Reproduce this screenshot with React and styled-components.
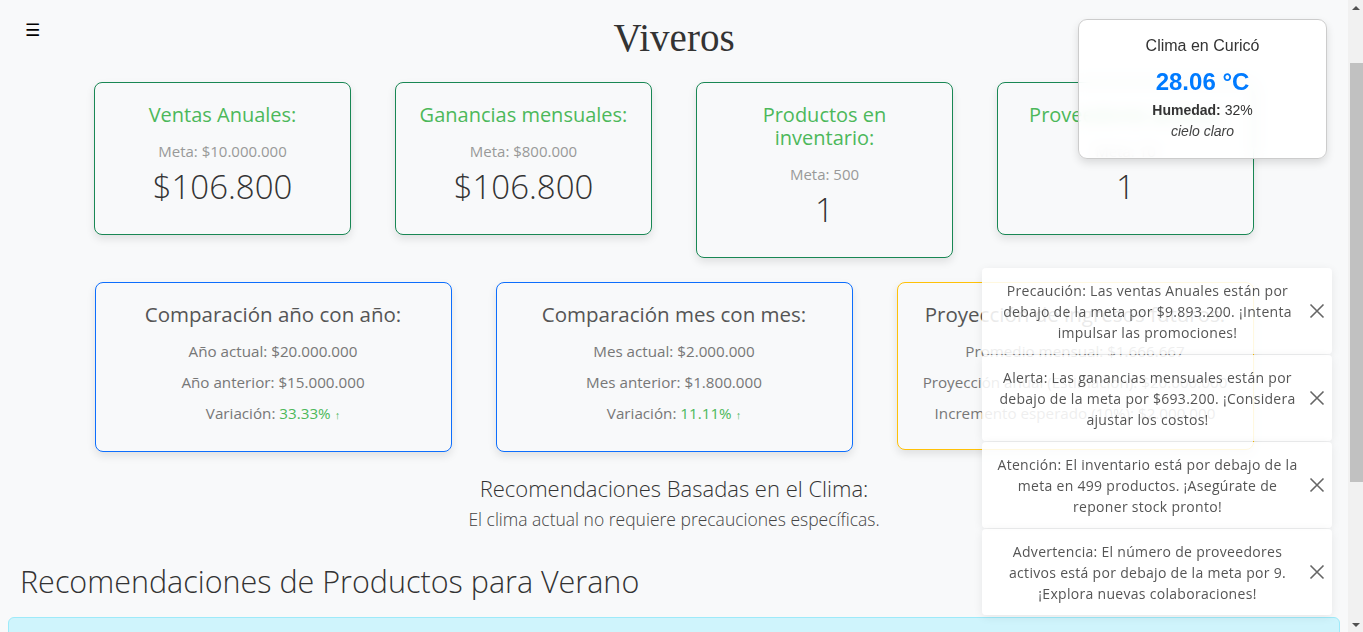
import React from "react";
import styled, { createGlobalStyle } from "styled-components";

const GlobalStyle = createGlobalStyle`
  html, body { margin: 0; padding: 0; }
  body {
    background: #f8f9fa;
    font-family: "Open Sans", "Noto Sans", sans-serif;
    color: #333;
  }
  * { box-sizing: border-box; }
`;

const Page = styled.div`
  padding: 0 23px 80px 8px;
`;

const Header = styled.header`
  display: grid;
  grid-template-columns: 1fr auto 1fr;
  align-items: start;
  height: 82px;
`;

const MenuButton = styled.button`
  justify-self: start;
  margin: 20px 0 0 9px;
  padding: 0 8px;
  background: none;
  border: none;
  font-size: 17px;
  line-height: 20px;
  color: #000;
  font-family: "DejaVu Sans", sans-serif;
  cursor: pointer;
`;

const Title = styled.h1`
  margin: 14px 0 0;
  font-family: "Liberation Serif", serif;
  font-weight: 400;
  font-size: 39px;
  line-height: 48px;
  color: #333;
`;

const CardRow = styled.div`
  display: flex;
  justify-content: center;
  align-items: flex-start;
  gap: 44px;
  margin-bottom: ${(p) => p.$mb || 0}px;
`;

const Card = styled.div`
  width: ${(p) => p.$w}px;
  border: 1px solid ${(p) => p.$border};
  border-radius: 8px;
  background: #f8f9fa;
  box-shadow: 0 4px 8px rgba(0, 0, 0, 0.1);
  text-align: center;
  padding: ${(p) => p.$pad};
`;

const KpiTitle = styled.h3`
  margin: 0 0 15px;
  font-size: 20px;
  line-height: 23px;
  font-weight: 400;
  color: #4cb85a;
`;

const KpiMeta = styled.p`
  margin: 0 0 7px;
  font-size: 15px;
  line-height: 20px;
  color: #999;
`;

const KpiValue = styled.p`
  margin: 0;
  font-size: 33px;
  line-height: 38px;
  font-weight: 300;
  color: #333;
`;

const CompTitle = styled.h3`
  margin: 0 0 14px;
  font-size: 20.5px;
  line-height: 24px;
  font-weight: 400;
  color: #555;
`;

const CompLine = styled.p`
  margin: 0 0 9px;
  font-size: 15.2px;
  line-height: 22px;
  color: #777;
  &:last-child { margin-bottom: 0; }
`;

const Up = styled.span`
  color: #4cb85a;
  small { font-size: 11px; margin-left: 4px; }
`;

const WeatherRec = styled.section`
  text-align: center;
  margin-bottom: 31px;
`;

const RecTitle = styled.h4`
  margin: 0 0 6px;
  font-size: 22px;
  line-height: 26px;
  font-weight: 300;
  color: #333;
`;

const RecText = styled.p`
  margin: 0;
  font-size: 17.5px;
  line-height: 24px;
  font-weight: 300;
  color: #444;
`;

const SectionTitle = styled.h2`
  margin: 0 0 17px 12px;
  font-size: 30.5px;
  line-height: 38px;
  font-weight: 300;
  color: #333;
`;

const InfoBox = styled.div`
  background: #cff4fc;
  border: 1px solid #9eeaf9;
  border-radius: 6px;
  padding: 22px 16px;
  color: #055160;
  font-size: 15px;
  min-height: 220px;
`;

const Weather = styled.aside`
  position: fixed;
  top: 19px;
  right: 36px;
  width: 249px;
  padding: 16px 10px 16px;
  background: rgba(255, 255, 255, 0.88);
  backdrop-filter: blur(6px);
  border: 1px solid #ccc;
  border-radius: 9px;
  box-shadow: 0 4px 8px rgba(0, 0, 0, 0.12);
  text-align: center;
  font-family: "Liberation Sans", Arial, sans-serif;
  color: #333;
  z-index: 10;
`;

const WeatherCity = styled.div`
  font-size: 16px;
  line-height: 20px;
  margin-bottom: 12px;
`;

const WeatherTemp = styled.div`
  font-size: 24px;
  line-height: 28px;
  font-weight: 700;
  color: #007bff;
  margin-bottom: 4px;
`;

const WeatherLine = styled.div`
  font-size: 14px;
  line-height: 21px;
  font-style: ${(p) => (p.$italic ? "italic" : "normal")};
  color: ${(p) => (p.$italic ? "#444" : "#333")};
  b { font-weight: 700; }
`;

const ToastStack = styled.div`
  position: fixed;
  right: 31px;
  bottom: 17px;
  width: 350px;
  display: flex;
  flex-direction: column;
  gap: 1px;
  z-index: 20;
`;

const Toast = styled.div`
  display: flex;
  align-items: center;
  min-height: 86px;
  padding: 8px 4px 8px 13px;
  background: rgba(255, 255, 255, 0.88);
  border-radius: 4px;
  box-shadow: 0 2px 10px rgba(0, 0, 0, 0.08);
`;

const ToastText = styled.p`
  flex: none;
  width: 305px;
  margin: 0;
  text-align: center;
  font-size: 14px;
  letter-spacing: 0.3px;
  line-height: 21px;
  color: #555;
`;

const CloseBtn = styled.button`
  flex: none;
  width: 22px;
  height: 22px;
  margin-left: 6px;
  padding: 0;
  background: none;
  border: none;
  display: flex;
  align-items: center;
  justify-content: center;
  cursor: pointer;
`;

const CloseIcon = () => (
  <svg width="16" height="16" viewBox="0 0 16 16" fill="none" stroke="#666" strokeWidth="1.6">
    <path d="M1.5 1.5 L14.5 14.5 M14.5 1.5 L1.5 14.5" />
  </svg>
);

const ScrollRail = styled.div`
  position: fixed;
  top: 0;
  right: 0;
  bottom: 0;
  width: 15px;
  background: #f1f1f1;
  display: flex;
  flex-direction: column;
  z-index: 30;
`;

const ScrollArrow = styled.div`
  flex: none;
  height: 15px;
  display: flex;
  align-items: center;
  justify-content: center;
  &::before {
    content: "";
    border-left: 4px solid transparent;
    border-right: 4px solid transparent;
    ${(p) => (p.$down ? "border-top: 4px solid #505050;" : "border-bottom: 4px solid #505050;")}
  }
`;

const ScrollTrack = styled.div`
  flex: 1;
  padding-top: 48px;
`;

const ScrollThumb = styled.div`
  height: 419px;
  margin: 0 0 0 2px;
  background: #c1c1c1;
`;

const kpis = [
  { title: "Ventas Anuales:", meta: "Meta: $10.000.000", value: "$106.800" },
  { title: "Ganancias mensuales:", meta: "Meta: $800.000", value: "$106.800" },
  { title: "Productos en inventario:", meta: "Meta: 500", value: "1" },
  { title: "Proveedores activos:", meta: "Meta: 10", value: "1" },
];

const comps = [
  {
    border: "#0d6efd",
    title: "Comparación año con año:",
    lines: ["Año actual: $20.000.000", "Año anterior: $15.000.000"],
    variation: "33.33%",
  },
  {
    border: "#0d6efd",
    title: "Comparación mes con mes:",
    lines: ["Mes actual: $2.000.000", "Mes anterior: $1.800.000"],
    variation: "11.11%",
  },
  {
    border: "#ffc107",
    title: "Proyección de ingresos futuros:",
    lines: [
      "Promedio mensual: $1.666.667",
      "Proyección anual (Estimación): $20.000.000",
      "Incremento esperado (10%): $2.000.000",
    ],
  },
];

const toasts = [
  "Precaución: Las ventas Anuales están por debajo de la meta por $9.893.200. ¡Intenta impulsar las promociones!",
  "Alerta: Las ganancias mensuales están por debajo de la meta por $693.200. ¡Considera ajustar los costos!",
  "Atención: El inventario está por debajo de la meta en 499 productos. ¡Asegúrate de reponer stock pronto!",
  "Advertencia: El número de proveedores activos está por debajo de la meta por 9. ¡Explora nuevas colaboraciones!",
];

export default function App() {
  return (
    <>
      <GlobalStyle />
      <Page>
        <Header>
          <MenuButton aria-label="menu">☰</MenuButton>
          <Title>Viveros</Title>
          <div />
        </Header>

        <CardRow $mb={24}>
          {kpis.map((k) => (
            <Card key={k.title} $w={257} $border="#198754" $pad="20px 20px 28px">
              <KpiTitle>{k.title}</KpiTitle>
              <KpiMeta>{k.meta}</KpiMeta>
              <KpiValue>{k.value}</KpiValue>
            </Card>
          ))}
        </CardRow>

        <CardRow $mb={23}>
          {comps.map((c) => (
            <Card key={c.title} $w={357} $border={c.border} $pad="19px 12px 25px">
              <CompTitle>{c.title}</CompTitle>
              {c.lines.map((l) => (
                <CompLine key={l}>{l}</CompLine>
              ))}
              {c.variation && (
                <CompLine>
                  Variación:{" "}
                  <Up>
                    {c.variation}
                    <small>↑</small>
                  </Up>
                </CompLine>
              )}
            </Card>
          ))}
        </CardRow>

        <WeatherRec>
          <RecTitle>Recomendaciones Basadas en el Clima:</RecTitle>
          <RecText>El clima actual no requiere precauciones específicas.</RecText>
        </WeatherRec>

        <SectionTitle>Recomendaciones de Productos para Verano</SectionTitle>
        <InfoBox>Productos recomendados para la temporada de verano.</InfoBox>
      </Page>

      <Weather>
        <WeatherCity>Clima en Curicó</WeatherCity>
        <WeatherTemp>28.06 °C</WeatherTemp>
        <WeatherLine>
          <b>Humedad:</b> 32%
        </WeatherLine>
        <WeatherLine $italic>cielo claro</WeatherLine>
      </Weather>

      <ToastStack>
        {toasts.map((t) => (
          <Toast key={t}>
            <ToastText>{t}</ToastText>
            <CloseBtn aria-label="cerrar">
              <CloseIcon />
            </CloseBtn>
          </Toast>
        ))}
      </ToastStack>

      <ScrollRail aria-hidden="true">
        <ScrollArrow />
        <ScrollTrack>
          <ScrollThumb />
        </ScrollTrack>
        <ScrollArrow $down />
      </ScrollRail>
    </>
  );
}
